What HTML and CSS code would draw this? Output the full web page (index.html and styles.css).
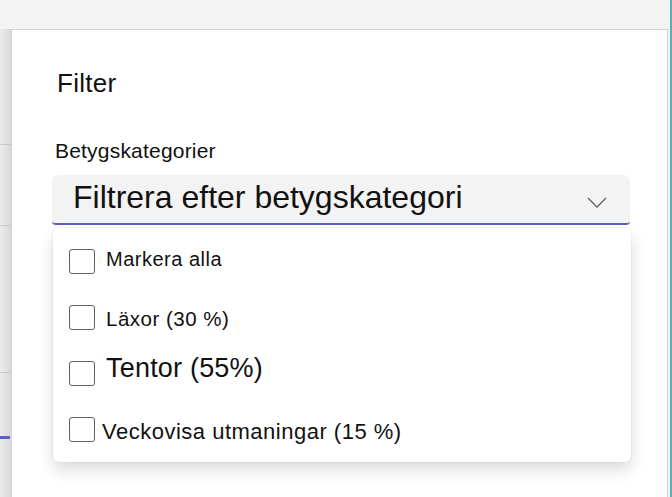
FILE: index.html
```html
<!DOCTYPE html>
<html>
<head>
    <title>Filter</title>
    <link rel="stylesheet" href="styles.css">
</head>
<body>
    <div class="app">
        <div class="topbar"></div>
        <div class="workspace">
            <div class="rail">
                <div class="rail-row rail-row-1"></div>
                <div class="rail-row rail-row-2"></div>
                <div class="rail-row rail-row-3"></div>
                <div class="rail-active"></div>
            </div>

            <section class="panel">
                <h2 class="panel-title">Filter</h2>

                <label class="field-label" for="category">Betygskategorier</label>
                <div class="dropdown" id="category">
                    <span class="dropdown-text">Filtrera efter betygskategori</span>
                    <svg class="chevron" width="20" height="11" viewBox="0 0 20 11">
                        <polyline points="1,1 10,10 19,1" fill="none" stroke="#616161" stroke-width="1.3"/>
                    </svg>
                </div>

                <ul class="menu">
                    <li class="option">
                        <span class="checkbox"></span>
                        <span class="option-label label-all">Markera alla</span>
                    </li>
                    <li class="option">
                        <span class="checkbox"></span>
                        <span class="option-label label-homework">Läxor (30 %)</span>
                    </li>
                    <li class="option">
                        <span class="checkbox"></span>
                        <span class="option-label label-exams">Tentor (55%)</span>
                    </li>
                    <li class="option">
                        <span class="checkbox"></span>
                        <span class="option-label label-weekly">Veckovisa utmaningar (15 %)</span>
                    </li>
                </ul>
            </section>
        </div>
    </div>
</body>
</html>
```

FILE: styles.css
```css
body {
    margin: 0;
    font-family: "Liberation Sans", Arial, sans-serif;
    color: #111;
    background: #f3f3f3;
}

.app {
    height: 497px;
    display: flex;
    flex-direction: column;
    border-right: 2px solid #4fb4bd;
    overflow: hidden;
}

.topbar {
    height: 29px;
    flex-shrink: 0;
    background: #f3f3f3;
}

.workspace {
    flex: 1;
    display: flex;
}

/* left rail peeking out behind the panel */
.rail {
    width: 11px;
    flex-shrink: 0;
    background: linear-gradient(to right, #ebebeb, #d9d9d9);
}

.rail-row {
    border-bottom: 1px solid #c9c9c9;
}

.rail-row-1 {
    height: 115px;
}

.rail-row-2 {
    height: 80px;
}

.rail-row-3 {
    height: 146px;
}

.rail-active {
    width: 10px;
    height: 3px;
    margin-top: 63px;
    background: #5b5fc7;
}

.panel {
    width: 657px;
    flex-shrink: 0;
    background: #fff;
    border: 1px solid #d1d1d1;
    border-bottom: none;
    padding: 40px 0 0 40px;
    box-sizing: border-box;
}

.panel-title {
    margin: 0 0 44px 5px;
    font-size: 26px;
    font-weight: normal;
    line-height: 1;
    letter-spacing: 0.3px;
}

.field-label {
    display: block;
    margin: 0 0 14px 3px;
    font-size: 21px;
    line-height: 1;
    letter-spacing: 0.2px;
}

.dropdown {
    width: 578px;
    height: 50px;
    box-sizing: border-box;
    display: flex;
    align-items: flex-start;
    justify-content: space-between;
    padding: 6px 23px 0 21px;
    background: #f3f3f3;
    border-bottom: 2px solid #5b5fc7;
    border-radius: 6px 6px 4px 4px;
}

.dropdown-text {
    font-size: 32px;
    line-height: 1;
}

.chevron {
    margin-top: 16px;
}

.menu {
    list-style: none;
    width: 578px;
    margin: 3px 0 0 1px;
    padding: 5px 0;
    background: #fff;
    border-radius: 6px;
    box-shadow: 0 0 2px rgba(0, 0, 0, 0.12), 0 8px 16px rgba(0, 0, 0, 0.14);
}

.option {
    height: 56px;
    display: flex;
    align-items: center;
    padding-left: 16px;
}

.checkbox {
    width: 26px;
    height: 25px;
    box-sizing: border-box;
    border: 1px solid #616161;
    border-radius: 3px;
    flex-shrink: 0;
}

.option-label {
    margin-left: 11px;
    line-height: 1;
}

.label-all {
    font-size: 20px;
    letter-spacing: 0.5px;
    margin-bottom: 4px;
}

.label-homework {
    font-size: 20.5px;
    letter-spacing: 0.5px;
    margin-top: 4px;
}

.label-exams {
    font-size: 27px;
    letter-spacing: 0.2px;
    margin-bottom: 9px;
}

.label-weekly {
    margin-left: 7px;
    font-size: 22px;
    letter-spacing: 0.5px;
    margin-top: 5px;
}
```
